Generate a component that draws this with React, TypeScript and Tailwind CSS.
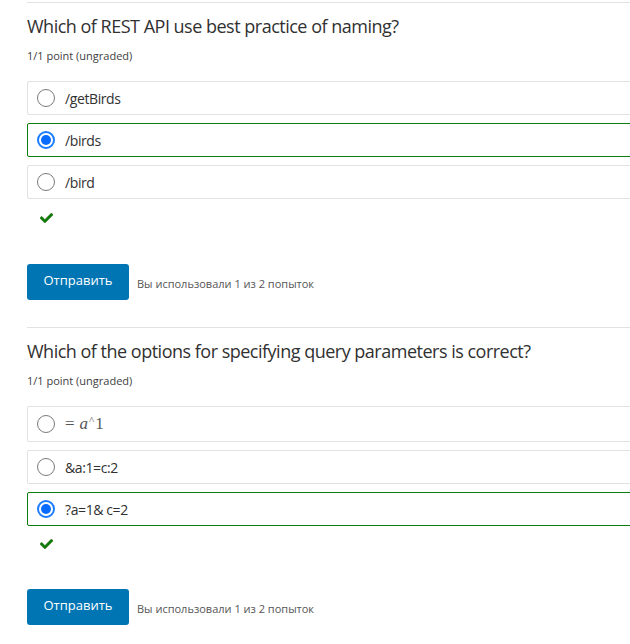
import React from "react";

type Option = { id: string; label: React.ReactNode; tall?: boolean };

const questions: {
  id: string;
  title: string;
  options: Option[];
  selected: string;
}[] = [
  {
    id: "q1",
    title: "Which of REST API use best practice of naming?",
    options: [
      { id: "a", label: "/getBirds" },
      { id: "b", label: "/birds" },
      { id: "c", label: "/bird" },
    ],
    selected: "b",
  },
  {
    id: "q2",
    title: "Which of the options for specifying query parameters is correct?",
    options: [
      {
        id: "a",
        tall: true,
        label: (
          <span className="font-['Liberation_Serif',serif] text-[17px] tracking-normal text-[#555]">
            <span className="mr-[5px]">=</span>
            <span className="italic">a</span>
            <span className="relative -top-[5px] mx-[1px] text-[11px]">^</span>
            <span>1</span>
          </span>
        ),
      },
      { id: "b", label: "&a:1=c:2" },
      { id: "c", label: "?a=1& c=2" },
    ],
    selected: "c",
  },
];

function Radio({ checked }: { checked: boolean }) {
  if (checked) {
    return (
      <span className="flex h-[18px] w-[18px] shrink-0 items-center justify-center rounded-full border-2 border-[#1a7cff] bg-white">
        <span className="h-[10px] w-[10px] rounded-full bg-[#0a6cff]" />
      </span>
    );
  }
  return (
    <span className="h-[18px] w-[18px] shrink-0 rounded-full border border-[#7a7a7a] bg-white" />
  );
}

function CheckMark() {
  return (
    <svg viewBox="0 64 512 384" className="block h-[10px] w-[13px]" aria-hidden>
      <path
        fill="#0b7d0b"
        stroke="#3f5a00"
        strokeWidth="14"
        d="M173.898 439.404l-166.4-166.4c-9.997-9.997-9.997-26.206 0-36.204l36.203-36.204c9.997-9.998 26.207-9.998 36.204 0L192 312.69 432.095 72.596c9.997-9.997 26.207-9.997 36.204 0l36.203 36.204c9.997 9.997 9.997 26.206 0 36.204l-294.4 294.401c-9.998 9.997-26.207 9.997-36.204-.001z"
      />
    </svg>
  );
}

export default function App() {
  return (
    <div className="h-[644px] w-[630px] overflow-hidden bg-white pt-[2px] font-['Open_Sans',sans-serif]">
      <div className="ml-[27px] w-[640px]">
        {questions.map((q, qi) => (
          <section
            key={q.id}
            className={
              qi === 0
                ? "border-t border-[#e2e2e2] pt-[11px] pb-[27px]"
                : "border-t border-[#e2e2e2] pt-[11px]"
            }
          >
            <h2 className="text-[18px] leading-[24px] tracking-[-0.5px] text-[#313131]">
              {q.title}
            </h2>
            <p className="mt-[10px] text-[11px] leading-[16px] text-[#414141]">
              1/1 point (ungraded)
            </p>

            <div className="mt-[17px] flex flex-col gap-[8px]">
              {q.options.map((o) => {
                const checked = o.id === q.selected;
                return (
                  <div
                    key={o.id}
                    className={
                      "flex items-center gap-[10px] rounded-[2px] border pl-[9px] " +
                      (o.tall ? "h-[36px] " : "h-[34px] ") +
                      (checked ? "border-[#0d7d0d]" : "border-[#e2e2e2]")
                    }
                  >
                    <Radio checked={checked} />
                    <span className="text-[14px] tracking-[-0.4px] text-[#313131]">
                      {o.label}
                    </span>
                  </div>
                );
              })}
            </div>

            <div className={qi === 0 ? "mt-[14px] pl-[13px]" : "mt-[13px] pl-[13px]"}>
              <CheckMark />
            </div>

            <div
              className={
                qi === 0
                  ? "mt-[41px] flex items-center gap-[8px]"
                  : "mt-[40px] flex items-center gap-[8px]"
              }
            >
              <button className="h-[36px] w-[102px] rounded-[3px] bg-[#0075b4] pb-[2px] text-[13px] text-white">
                Отправить
              </button>
              <span className="pt-[4px] text-[11px] text-[#555]">
                Вы использовали 1 из 2 попыток
              </span>
            </div>
          </section>
        ))}
      </div>
    </div>
  );
}
